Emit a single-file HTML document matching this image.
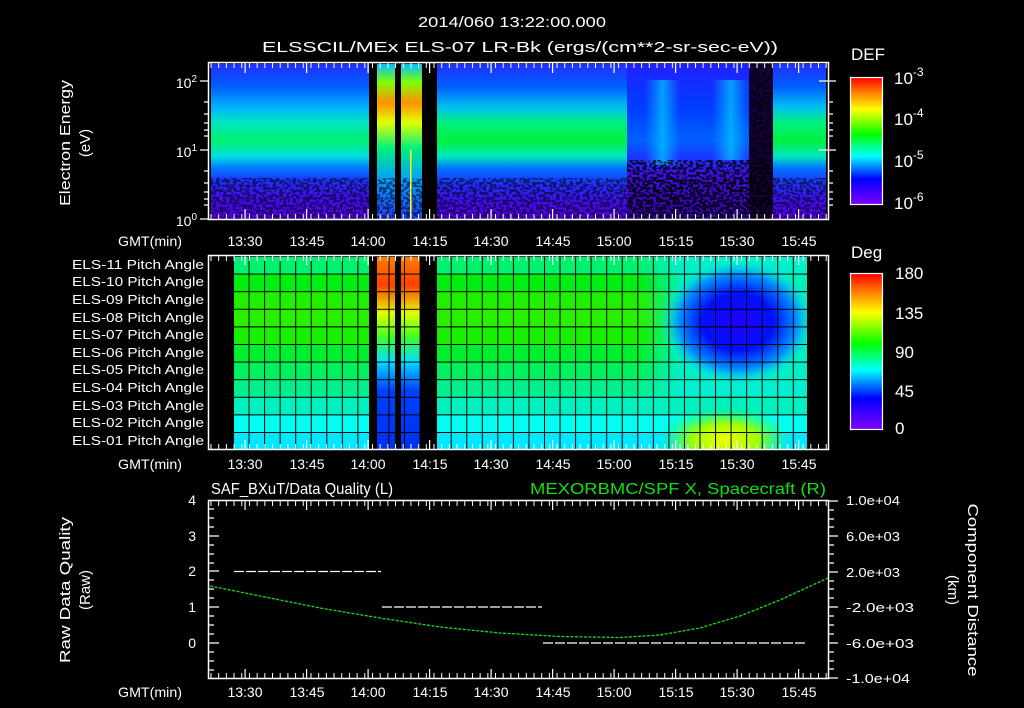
<!DOCTYPE html>
<html><head><meta charset="utf-8"><style>
html,body{margin:0;padding:0;background:#000;}
svg{display:block;}
text{font-family:"Liberation Sans",sans-serif;fill:#fff;}
</style></head><body>
<svg width="1024" height="708" viewBox="0 0 1024 708" xmlns="http://www.w3.org/2000/svg">
<defs>
<linearGradient id="rb" x1="0" y1="0" x2="0" y2="1">
<stop offset="0" stop-color="#ff0000"/><stop offset="0.12" stop-color="#ff8000"/><stop offset="0.25" stop-color="#ffff00"/><stop offset="0.45" stop-color="#00ff00"/><stop offset="0.62" stop-color="#00ffff"/><stop offset="0.8" stop-color="#0000ff"/><stop offset="1" stop-color="#8000ff"/>
</linearGradient>
<linearGradient id="sA" x1="0" y1="64" x2="0" y2="218" gradientUnits="userSpaceOnUse">
<stop offset="0" stop-color="#2030ff"/><stop offset="0.15" stop-color="#0060ff"/><stop offset="0.28" stop-color="#00b0ff"/><stop offset="0.38" stop-color="#00e8c0"/><stop offset="0.5" stop-color="#00f070"/><stop offset="0.6" stop-color="#00e0e0"/><stop offset="0.67" stop-color="#0080ff"/><stop offset="0.76" stop-color="#2030ff"/><stop offset="0.86" stop-color="#4010f0"/><stop offset="1" stop-color="#5000e0"/>
</linearGradient>
<linearGradient id="sC" x1="0" y1="64" x2="0" y2="218" gradientUnits="userSpaceOnUse">
<stop offset="0" stop-color="#2030ff"/><stop offset="0.15" stop-color="#0060ff"/><stop offset="0.28" stop-color="#00c0f0"/><stop offset="0.38" stop-color="#00f080"/><stop offset="0.5" stop-color="#00f040"/><stop offset="0.6" stop-color="#00e8c0"/><stop offset="0.68" stop-color="#0070ff"/><stop offset="0.78" stop-color="#2030ff"/><stop offset="0.88" stop-color="#4010f0"/><stop offset="1" stop-color="#5000e0"/>
</linearGradient>
<linearGradient id="sD" x1="0" y1="64" x2="0" y2="218" gradientUnits="userSpaceOnUse">
<stop offset="0" stop-color="#2020ff"/><stop offset="0.3" stop-color="#0040ff"/><stop offset="0.5" stop-color="#0060ff"/><stop offset="0.62" stop-color="#2030ff"/><stop offset="0.72" stop-color="#4010e0"/><stop offset="1" stop-color="#3000a0"/>
</linearGradient>
<linearGradient id="sB" x1="0" y1="64" x2="0" y2="218" gradientUnits="userSpaceOnUse">
<stop offset="0" stop-color="#00c0ff"/><stop offset="0.12" stop-color="#80ff00"/><stop offset="0.25" stop-color="#ff9000"/><stop offset="0.38" stop-color="#e0ff00"/><stop offset="0.55" stop-color="#00f080"/><stop offset="0.75" stop-color="#00a0ff"/><stop offset="1" stop-color="#2040ff"/>
</linearGradient>
<linearGradient id="cyx" x1="0" y1="0" x2="1" y2="0">
<stop offset="0" stop-color="#00c0ff" stop-opacity="0"/><stop offset="0.5" stop-color="#00d0ff" stop-opacity="0.7"/><stop offset="1" stop-color="#00c0ff" stop-opacity="0"/>
</linearGradient>
<linearGradient id="pG" x1="0" y1="256" x2="0" y2="448" gradientUnits="userSpaceOnUse">
<stop offset="0" stop-color="#ff8000"/><stop offset="0.15" stop-color="#ff4000"/><stop offset="0.3" stop-color="#e0ff00"/><stop offset="0.42" stop-color="#40ff20"/><stop offset="0.55" stop-color="#00e0ff"/><stop offset="0.7" stop-color="#0040ff"/><stop offset="1" stop-color="#0030f0"/>
</linearGradient>
<linearGradient id="fade" x1="0" y1="0" x2="1" y2="0">
<stop offset="0" stop-color="#00f0d0" stop-opacity="0"/><stop offset="0.25" stop-color="#00f0e0" stop-opacity="0.8"/><stop offset="1" stop-color="#00f0e0" stop-opacity="0.8"/>
</linearGradient>
<radialGradient id="blob" cx="738" cy="322" r="75" gradientUnits="userSpaceOnUse" gradientTransform="translate(738 322) scale(1.05 0.85) translate(-738 -322)">
<stop offset="0" stop-color="#2000ff"/><stop offset="0.45" stop-color="#0010ff"/><stop offset="0.75" stop-color="#0090ff"/><stop offset="1" stop-color="#00ffe0" stop-opacity="0"/>
</radialGradient>
<radialGradient id="yel" cx="725" cy="440" r="55" gradientUnits="userSpaceOnUse" gradientTransform="translate(725 440) scale(1.2 0.6) translate(-725 -440)">
<stop offset="0" stop-color="#f0ff00"/><stop offset="0.5" stop-color="#a0ff00"/><stop offset="1" stop-color="#20ff60" stop-opacity="0"/>
</radialGradient>
<filter id="spk" x="0" y="0" width="1" height="1">
<feTurbulence type="fractalNoise" baseFrequency="0.3 0.4" numOctaves="1" seed="3"/>
<feColorMatrix type="matrix" values="0 0 0 0 0  0 0 0 0 0  0 0 0 0 0  0 0 0 -9 5"/>
</filter>
<pattern id="grid" x="233" y="256" width="15.55" height="17.6" patternUnits="userSpaceOnUse">
<path d="M0 0V17.6M0 0H15.55" stroke="#000" stroke-width="2" fill="none"/>
</pattern>
<pattern id="tk" x="210.5" y="0" width="7.69" height="10" patternUnits="userSpaceOnUse"><rect x="0" y="0" width="1" height="10" fill="#fff"/></pattern>
<pattern id="tkM" x="214" y="0" width="61.5" height="20" patternUnits="userSpaceOnUse"><rect x="30.5" y="0" width="1.2" height="20" fill="#fff"/></pattern>
</defs>

<text x="512" y="27" font-size="15" text-anchor="middle" textLength="188" lengthAdjust="spacingAndGlyphs">2014/060 13:22:00.000</text>
<text x="520" y="52" font-size="15" text-anchor="middle" textLength="516" lengthAdjust="spacingAndGlyphs">ELSSCIL/MEx ELS-07 LR-Bk  (ergs/(cm**2-sr-sec-eV))</text>

<!-- Panel 1 -->
<rect x="209" y="63" width="619" height="156" fill="#000"/>
<rect x="211" y="64" width="158" height="155" fill="url(#sA)"/>
<rect x="377" y="64" width="18" height="155" fill="url(#sB)"/>
<rect x="401" y="64" width="21" height="155" fill="url(#sB)"/>
<rect x="437" y="64" width="190" height="155" fill="url(#sC)"/>
<rect x="627" y="64" width="122" height="155" fill="url(#sD)"/>
<rect x="645" y="80" width="35" height="85" fill="url(#cyx)"/>
<rect x="712" y="80" width="38" height="80" fill="url(#cyx)"/>
<rect x="749" y="64" width="24" height="155" fill="#180040"/>
<rect x="773" y="64" width="53" height="155" fill="url(#sC)"/>
<rect x="211" y="178" width="615" height="41" filter="url(#spk)" opacity="0.55"/>
<rect x="627" y="160" width="146" height="59" filter="url(#spk)" opacity="0.75"/>
<rect x="750" y="64" width="22" height="155" filter="url(#spk)" opacity="0.8"/>
<rect x="369" y="64" width="8" height="155" fill="#000"/>
<rect x="395" y="64" width="6" height="155" fill="#000"/>
<rect x="422" y="64" width="15" height="155" fill="#000"/>
<rect x="410" y="150" width="1.5" height="69" fill="#ffff00"/>
<rect x="208.5" y="62.5" width="620" height="157" fill="none" stroke="#fff" stroke-width="1.5"/>
<rect x="209" y="63" width="619" height="5" fill="url(#tk)"/>
<rect x="209" y="214" width="619" height="5" fill="url(#tk)"/>
<rect x="209" y="63" width="619" height="10" fill="url(#tkM)"/>
<rect x="209" y="209" width="619" height="10" fill="url(#tkM)"/>
<g stroke="#fff" stroke-width="1.2">
<path d="M200 81H209M200 150H209M200 219H209M819 81H836M819 150H836"/>
<path d="M204 102H209M204 114H209M204 123H209M204 130H209M204 136H209M204 171H209M204 183H209M204 192H209M204 199H209M204 205H209M828 102H833M828 114H833M828 123H833M828 130H833M828 136H833M828 171H833M828 183H833M828 192H833M828 199H833M828 205H833"/>
</g>
<text x="197" y="88" font-size="14" text-anchor="end">10<tspan dy="-6" font-size="10">2</tspan></text>
<text x="197" y="157" font-size="14" text-anchor="end">10<tspan dy="-6" font-size="10">1</tspan></text>
<text x="197" y="226" font-size="14" text-anchor="end">10<tspan dy="-6" font-size="10">0</tspan></text>
<text transform="translate(70 143) rotate(-90)" font-size="15" text-anchor="middle" textLength="126" lengthAdjust="spacingAndGlyphs">Electron Energy</text>
<text transform="translate(90 143) rotate(-90)" font-size="15" text-anchor="middle">(eV)</text>
<text x="851" y="60" font-size="17">DEF</text>
<rect x="850.5" y="77.5" width="32" height="127" fill="url(#rb)" stroke="#fff" stroke-width="1.2"/>
<text x="894" y="84" font-size="17">10<tspan dy="-8" font-size="12">-3</tspan></text>
<text x="894" y="125" font-size="17">10<tspan dy="-8" font-size="12">-4</tspan></text>
<text x="894" y="167" font-size="17">10<tspan dy="-8" font-size="12">-5</tspan></text>
<text x="894" y="209" font-size="17">10<tspan dy="-8" font-size="12">-6</tspan></text>
<text x="118" y="246" font-size="14" textLength="64" lengthAdjust="spacingAndGlyphs">GMT(min)</text>
<g font-size="14" text-anchor="middle">
<text x="245" y="246">13:30</text><text x="307" y="246">13:45</text><text x="368" y="246">14:00</text><text x="430" y="246">14:15</text><text x="491" y="246">14:30</text><text x="553" y="246">14:45</text><text x="614" y="246">15:00</text><text x="676" y="246">15:15</text><text x="737" y="246">15:30</text><text x="799" y="246">15:45</text>
</g>

<!-- Panel 2 -->
<rect x="233" y="256" width="574" height="17.6" fill="#00f070"/>
<rect x="233" y="273.6" width="574" height="17.6" fill="#00ee10"/>
<rect x="233" y="291.2" width="574" height="17.6" fill="#20f000"/>
<rect x="233" y="308.8" width="574" height="17.6" fill="#28f000"/>
<rect x="233" y="326.4" width="574" height="17.6" fill="#18f000"/>
<rect x="233" y="344" width="574" height="17.6" fill="#00f030"/>
<rect x="233" y="361.6" width="574" height="17.6" fill="#00f060"/>
<rect x="233" y="379.2" width="574" height="17.6" fill="#00f090"/>
<rect x="233" y="396.8" width="574" height="17.6" fill="#00f0c0"/>
<rect x="233" y="414.4" width="574" height="17.6" fill="#00fff0"/>
<rect x="233" y="432" width="574" height="17" fill="#00e8ff"/>
<rect x="640" y="256" width="167" height="140" fill="url(#fade)"/>
<rect x="640" y="256" width="167" height="193" fill="url(#blob)"/>
<rect x="640" y="396" width="167" height="53" fill="url(#yel)"/>
<rect x="377" y="256" width="18" height="193" fill="url(#pG)"/>
<rect x="401" y="256" width="19" height="193" fill="url(#pG)"/>
<rect x="233" y="256" width="574" height="193" fill="url(#grid)"/>
<rect x="211" y="256" width="22" height="193" fill="#000"/>
<rect x="807" y="256" width="19" height="193" fill="#000"/>
<rect x="369" y="256" width="8" height="193" fill="#000"/>
<rect x="395" y="256" width="6" height="193" fill="#000"/>
<rect x="420" y="256" width="17" height="193" fill="#000"/>
<rect x="208.5" y="255.5" width="620" height="194" fill="none" stroke="#fff" stroke-width="1.5"/>
<rect x="209" y="256" width="619" height="5" fill="url(#tk)"/>
<rect x="209" y="444" width="619" height="5" fill="url(#tk)"/>
<rect x="209" y="256" width="619" height="9" fill="url(#tkM)"/>
<rect x="209" y="440" width="619" height="9" fill="url(#tkM)"/>
<g font-size="13">
<text x="72" y="269" textLength="132" lengthAdjust="spacingAndGlyphs">ELS-11 Pitch Angle</text>
<text x="72" y="286" textLength="132" lengthAdjust="spacingAndGlyphs">ELS-10 Pitch Angle</text>
<text x="72" y="304" textLength="132" lengthAdjust="spacingAndGlyphs">ELS-09 Pitch Angle</text>
<text x="72" y="322" textLength="132" lengthAdjust="spacingAndGlyphs">ELS-08 Pitch Angle</text>
<text x="72" y="339" textLength="132" lengthAdjust="spacingAndGlyphs">ELS-07 Pitch Angle</text>
<text x="72" y="357" textLength="132" lengthAdjust="spacingAndGlyphs">ELS-06 Pitch Angle</text>
<text x="72" y="374" textLength="132" lengthAdjust="spacingAndGlyphs">ELS-05 Pitch Angle</text>
<text x="72" y="392" textLength="132" lengthAdjust="spacingAndGlyphs">ELS-04 Pitch Angle</text>
<text x="72" y="410" textLength="132" lengthAdjust="spacingAndGlyphs">ELS-03 Pitch Angle</text>
<text x="72" y="427" textLength="132" lengthAdjust="spacingAndGlyphs">ELS-02 Pitch Angle</text>
<text x="72" y="445" textLength="132" lengthAdjust="spacingAndGlyphs">ELS-01 Pitch Angle</text>
</g>
<text x="851" y="258" font-size="17">Deg</text>
<rect x="850.5" y="273.5" width="32" height="156" fill="url(#rb)" stroke="#fff" stroke-width="1.2"/>
<g font-size="17">
<text x="895" y="279">180</text><text x="895" y="319">135</text><text x="895" y="358">90</text><text x="895" y="397">45</text><text x="895" y="434">0</text>
</g>
<text x="118" y="469" font-size="14" textLength="64" lengthAdjust="spacingAndGlyphs">GMT(min)</text>
<g font-size="14" text-anchor="middle">
<text x="245" y="469">13:30</text><text x="307" y="469">13:45</text><text x="368" y="469">14:00</text><text x="430" y="469">14:15</text><text x="491" y="469">14:30</text><text x="553" y="469">14:45</text><text x="614" y="469">15:00</text><text x="676" y="469">15:15</text><text x="737" y="469">15:30</text><text x="799" y="469">15:45</text>
</g>

<!-- Panel 3 -->
<text x="211" y="494" font-size="16" textLength="182" lengthAdjust="spacingAndGlyphs">SAF_BXuT/Data Quality (L)</text>
<text x="530" y="494" font-size="16" textLength="296" lengthAdjust="spacingAndGlyphs" style="fill:#10e010">MEXORBMC/SPF X, Spacecraft (R)</text>
<rect x="208.5" y="500.5" width="620" height="178" fill="none" stroke="#fff" stroke-width="1.5"/>
<rect x="209" y="501" width="619" height="5" fill="url(#tk)"/>
<rect x="209" y="673" width="619" height="5" fill="url(#tk)"/>
<rect x="209" y="501" width="619" height="9" fill="url(#tkM)"/>
<rect x="209" y="669" width="619" height="9" fill="url(#tkM)"/>
<g stroke="#fff" stroke-width="1.2">
<path d="M209 536H219M209 571H219M209 607H219M209 643H219"/>
<path d="M209 509H214M209 518H214M209 527H214M209 545H214M209 554H214M209 563H214M209 580H214M209 589H214M209 598H214M209 616H214M209 625H214M209 634H214M209 652H214M209 661H214M209 670H214"/>
<path d="M828 501H838M828 536H838M828 572H838M828 607H838M828 643H838M828 678H838"/>
<path d="M828 510H834M828 519H834M828 527H834M828 545H834M828 554H834M828 563H834M828 581H834M828 589H834M828 598H834M828 616H834M828 625H834M828 634H834M828 652H834M828 661H834M828 669H834"/>
</g>
<g stroke="#fff" stroke-width="1.2" stroke-dasharray="10 2" fill="none">
<path d="M234 571.5H381"/><path d="M382 607H542"/><path d="M543 643H807"/>
</g>
<path d="M210 586 L260 596 L320 608 L380 618 L440 627 L500 633 L560 636.5 L620 637.5 L660 635 L700 628 L740 616 L780 600 L828 578" fill="none" stroke="#10e010" stroke-width="1.3" stroke-dasharray="3 1.5"/>
<g font-size="14" text-anchor="end">
<text x="196" y="505">4</text><text x="196" y="541">3</text><text x="196" y="576">2</text><text x="196" y="612">1</text><text x="196" y="648">0</text>
</g>
<g font-size="13">
<text x="846" y="505" textLength="54" lengthAdjust="spacingAndGlyphs">1.0e+04</text><text x="846" y="541" textLength="54" lengthAdjust="spacingAndGlyphs">6.0e+03</text><text x="846" y="577" textLength="54" lengthAdjust="spacingAndGlyphs">2.0e+03</text><text x="846" y="612" textLength="68" lengthAdjust="spacingAndGlyphs">-2.0e+03</text><text x="846" y="648" textLength="68" lengthAdjust="spacingAndGlyphs">-6.0e+03</text><text x="846" y="683" textLength="64" lengthAdjust="spacingAndGlyphs">-1.0e+04</text>
</g>
<text transform="translate(70 590) rotate(-90)" font-size="15" text-anchor="middle" textLength="146" lengthAdjust="spacingAndGlyphs">Raw Data Quality</text>
<text transform="translate(90 590) rotate(-90)" font-size="15" text-anchor="middle">(Raw)</text>
<text transform="translate(968 590) rotate(90)" font-size="15" text-anchor="middle" textLength="173" lengthAdjust="spacingAndGlyphs">Component Distance</text>
<text transform="translate(948 590) rotate(90)" font-size="15" text-anchor="middle">(km)</text>
<text x="118" y="697" font-size="14" textLength="64" lengthAdjust="spacingAndGlyphs">GMT(min)</text>
<g font-size="14" text-anchor="middle">
<text x="245" y="697">13:30</text><text x="307" y="697">13:45</text><text x="368" y="697">14:00</text><text x="430" y="697">14:15</text><text x="491" y="697">14:30</text><text x="553" y="697">14:45</text><text x="614" y="697">15:00</text><text x="676" y="697">15:15</text><text x="737" y="697">15:30</text><text x="799" y="697">15:45</text>
</g>
</svg>
</body></html>
